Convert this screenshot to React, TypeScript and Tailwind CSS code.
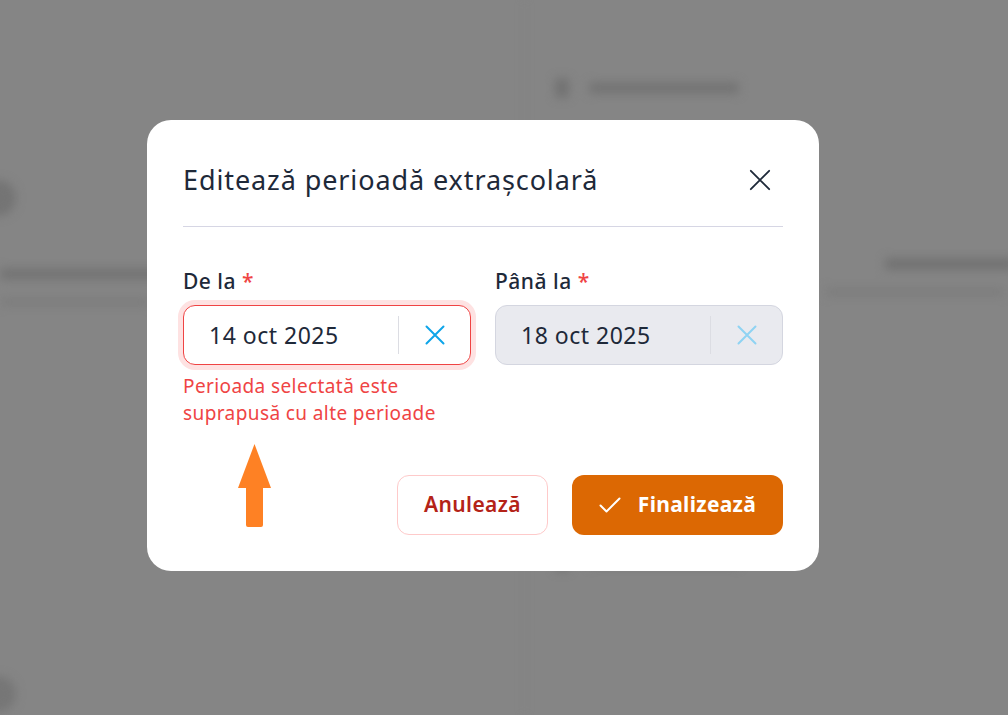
import { useState } from "react";

function CloseIcon({ className }: { className?: string }) {
  return (
    <svg viewBox="0 0 24 24" fill="none" stroke="currentColor" strokeWidth={2} strokeLinecap="round" className={className}>
      <path d="M2 2 22 22M22 2 2 22" />
    </svg>
  );
}

function ClearIcon({ className }: { className?: string }) {
  return (
    <svg viewBox="0 0 20 20" fill="none" stroke="currentColor" strokeWidth={2} strokeLinecap="round" className={className}>
      <path d="M1.5 1.5 18.5 18.5M18.5 1.5 1.5 18.5" />
    </svg>
  );
}

function CheckIcon({ className }: { className?: string }) {
  return (
    <svg viewBox="0 0 22 16" fill="none" stroke="currentColor" strokeWidth={2} strokeLinecap="round" strokeLinejoin="round" className={className}>
      <path d="M1.5 8.5 7.5 14.5 20.5 1.5" />
    </svg>
  );
}

function DateField({
  label,
  value,
  error,
  disabled,
}: {
  label: string;
  value: string;
  error?: string;
  disabled?: boolean;
}) {
  return (
    <div className="flex flex-col">
      <label className="mb-[10px] text-[21px] leading-7 font-medium tracking-[0.5px] text-[#1e2939]">
        {label} <span className="text-[#ef4444]">*</span>
      </label>
      <div
        className={
          error
            ? "flex h-[60px] items-center rounded-xl border border-[#ef4444] bg-white ring-[5px] ring-[#fee2e2]"
            : disabled
              ? "flex h-[60px] items-center rounded-xl border border-[#d4d6e0] bg-[#e9eaef]"
              : "flex h-[60px] items-center rounded-xl border border-[#d4d6e0] bg-white"
        }
      >
        <span className="flex-1 pl-[25px] text-[23px] tracking-[0.5px] text-[#1e2939]">{value}</span>
        <div className="h-[38px] w-px bg-[#dcdde3]" />
        <button className="flex w-[71px] items-center justify-center">
          <ClearIcon className={disabled ? "h-5 w-5 text-[#8fd3f3]" : "h-5 w-5 text-[#0ea5e9]"} />
        </button>
      </div>
      {error && (
        <p className="mt-2 w-[285px] text-[19px] leading-[27px] tracking-[0.4px] text-[#ef4444]">{error}</p>
      )}
    </div>
  );
}

export default function App() {
  const [from] = useState("14 oct 2025");
  const [to] = useState("18 oct 2025");

  return (
    <div className="relative h-[715px] w-[1008px] overflow-hidden bg-[#858585] font-['Noto_Sans',sans-serif]">
      {/* Page behind the backdrop */}
      <div className="grid h-full grid-cols-[525px_1fr] blur-[5px]">
        <div className="flex flex-col border-r border-[#7f7f7f] pt-[180px]">
          <div className="ml-[-20px] h-[36px] w-[36px] rounded-full bg-[#747474]" />
          <div className="mt-[52px] h-[12px] w-[160px] rounded bg-[#747474]" />
          <div className="mt-[18px] h-[8px] w-[150px] rounded bg-[#7c7c7c]" />
          <div className="mt-[370px] ml-[-20px] h-[36px] w-[36px] rounded-full bg-[#767676]" />
        </div>
        <div className="flex flex-col pt-[78px]">
          <div className="ml-[30px] flex items-center gap-5">
            <div className="h-[20px] w-[14px] rounded bg-[#727272]" />
            <div className="h-[12px] w-[150px] rounded bg-[#747474]" />
          </div>
          <div className="mt-[160px] ml-[360px] h-[12px] w-[130px] rounded bg-[#727272]" />
          <div className="mt-[18px] ml-[300px] h-[8px] w-[180px] rounded bg-[#7c7c7c]" />
          <div className="mt-[255px] ml-[30px] flex items-center gap-5">
            <div className="h-[20px] w-[14px] rounded bg-[#727272]" />
            <div className="h-[12px] w-[150px] rounded bg-[#747474]" />
          </div>
        </div>
      </div>

      {/* Modal */}
      <div className="absolute inset-0 pl-[147px] pt-[120px]">
        <div className="relative w-[672px] rounded-3xl bg-white px-9 pt-[41px] pb-9">
          <div className="flex items-center justify-between border-b border-[#d6d6e4] pb-[27px]">
            <h2 className="text-[27px] leading-[38px] tracking-[0.9px] text-[#1e2939]">Editează perioadă extrașcolară</h2>
            <button className="mr-[12px] text-[#1e2939]">
              <CloseIcon className="h-[22px] w-[22px]" />
            </button>
          </div>

          <div className="mt-10 grid grid-cols-2 gap-6">
            <DateField
              label="De la"
              value={from}
              error="Perioada selectată este suprapusă cu alte perioade"
            />
            <DateField label="Până la" value={to} disabled />
          </div>

          <div className="mt-12 flex justify-end gap-6">
            <button className="h-[60px] w-[151px] rounded-xl border border-[#fecaca] bg-white text-[21px] font-semibold tracking-[0.4px] text-[#b42318]">
              Anulează
            </button>
            <button className="flex h-[60px] w-[211px] items-center justify-center gap-[17px] rounded-xl bg-[#dc6803] text-[21px] font-bold tracking-[0.3px] text-white">
              <CheckIcon className="h-[16px] w-[22px]" />
              Finalizează
            </button>
          </div>

          {/* annotation arrow */}
          <svg
            viewBox="0 0 33 84"
            className="absolute top-[324px] left-[91px] h-[84px] w-[33px]"
          >
            <path d="M16.5 0 33 44 H25 V81 Q25 83 23 83 H10 Q8 83 8 81 V44 H0 Z" fill="#fe8124" />
          </svg>
        </div>
      </div>
    </div>
  );
}
